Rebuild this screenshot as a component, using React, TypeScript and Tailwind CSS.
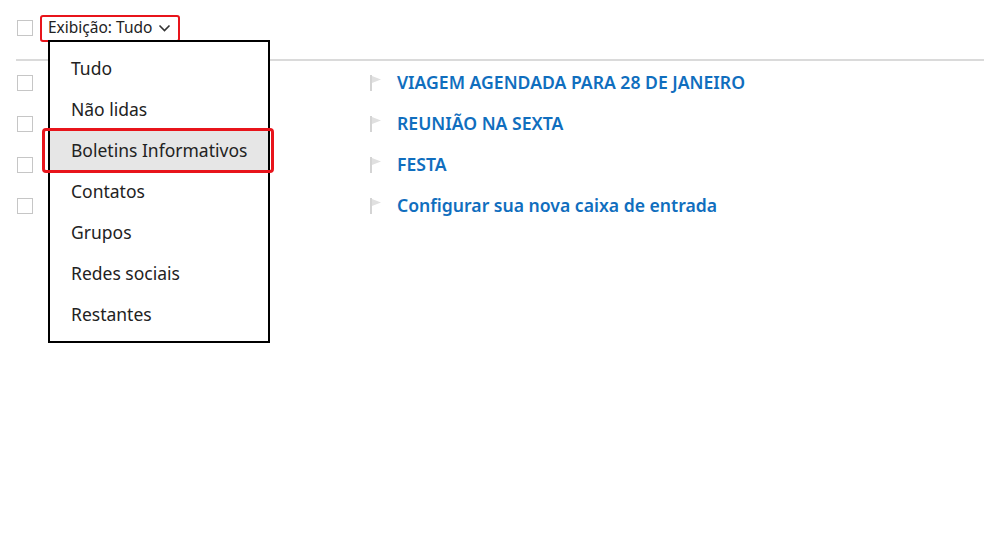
import { useState } from "react";

const filters = [
  "Tudo",
  "Não lidas",
  "Boletins Informativos",
  "Contatos",
  "Grupos",
  "Redes sociais",
  "Restantes",
];

const messages = [
  "VIAGEM AGENDADA PARA 28 DE JANEIRO",
  "REUNIÃO NA SEXTA",
  "FESTA",
  "Configurar sua nova caixa de entrada",
];

function Checkbox() {
  return <span className="block w-4 h-4 border border-[#c6c6c6] bg-white" />;
}

function Flag() {
  return (
    <svg width="12" height="16" viewBox="0 0 12 16" className="shrink-0">
      <rect x="0" y="0" width="2" height="16" fill="#d4d4d4" />
      <path d="M2 1 L11 4.5 L2 8 Z" fill="#e0e0e0" />
    </svg>
  );
}

export default function App() {
  const [active] = useState("Boletins Informativos");

  return (
    <div
      className="relative w-[984px] h-[552px] bg-white overflow-hidden text-[#222]"
      style={{ fontFamily: '"Segoe UI", "Noto Sans", "Open Sans", sans-serif' }}
    >
      {/* toolbar */}
      <div className="flex items-center h-[59px] pl-[17px] pb-[3px]">
        <Checkbox />
        <button className="ml-[7px] flex items-center gap-[6px] h-[27px] pl-[6px] pr-[7px] border-2 border-[#e8141b] rounded-[3px] text-[15.5px] text-[#222]">
          <span>Exibição: Tudo</span>
          <svg width="13" height="8" viewBox="0 0 13 8">
            <path d="M1.5 1.5 L6.5 6.5 L11.5 1.5" fill="none" stroke="#333" strokeWidth="1.6" />
          </svg>
        </button>
      </div>
      <div className="ml-[16px] h-[2px] bg-[#dadada]" />

      {/* message list */}
      <div className="pt-[1px]">
        {messages.map((subject) => (
          <div key={subject} className="flex items-center h-[41px]">
            <div className="pl-[17px] w-[370px]">
              <Checkbox />
            </div>
            <Flag />
            <span className="ml-[15px] text-[17.6px] font-semibold text-[#106ebe]">{subject}</span>
          </div>
        ))}
      </div>

      {/* filter menu */}
      <div className="absolute left-[48px] top-[40px] w-[222px] h-[303px] border-2 border-black bg-white pt-[6px]">
        {filters.map((name) => (
          <div
            key={name}
            className={`relative h-[41px] flex items-center pl-[21px] text-[17.5px] ${
              name === active ? "bg-[#e6e6e6]" : ""
            }`}
          >
            {name}
            {name === active && (
              <span className="absolute -left-[8px] -right-[6px] -top-[2px] -bottom-[2px] border-[3px] border-[#e8141b] rounded-[4px]" />
            )}
          </div>
        ))}
      </div>
    </div>
  );
}
